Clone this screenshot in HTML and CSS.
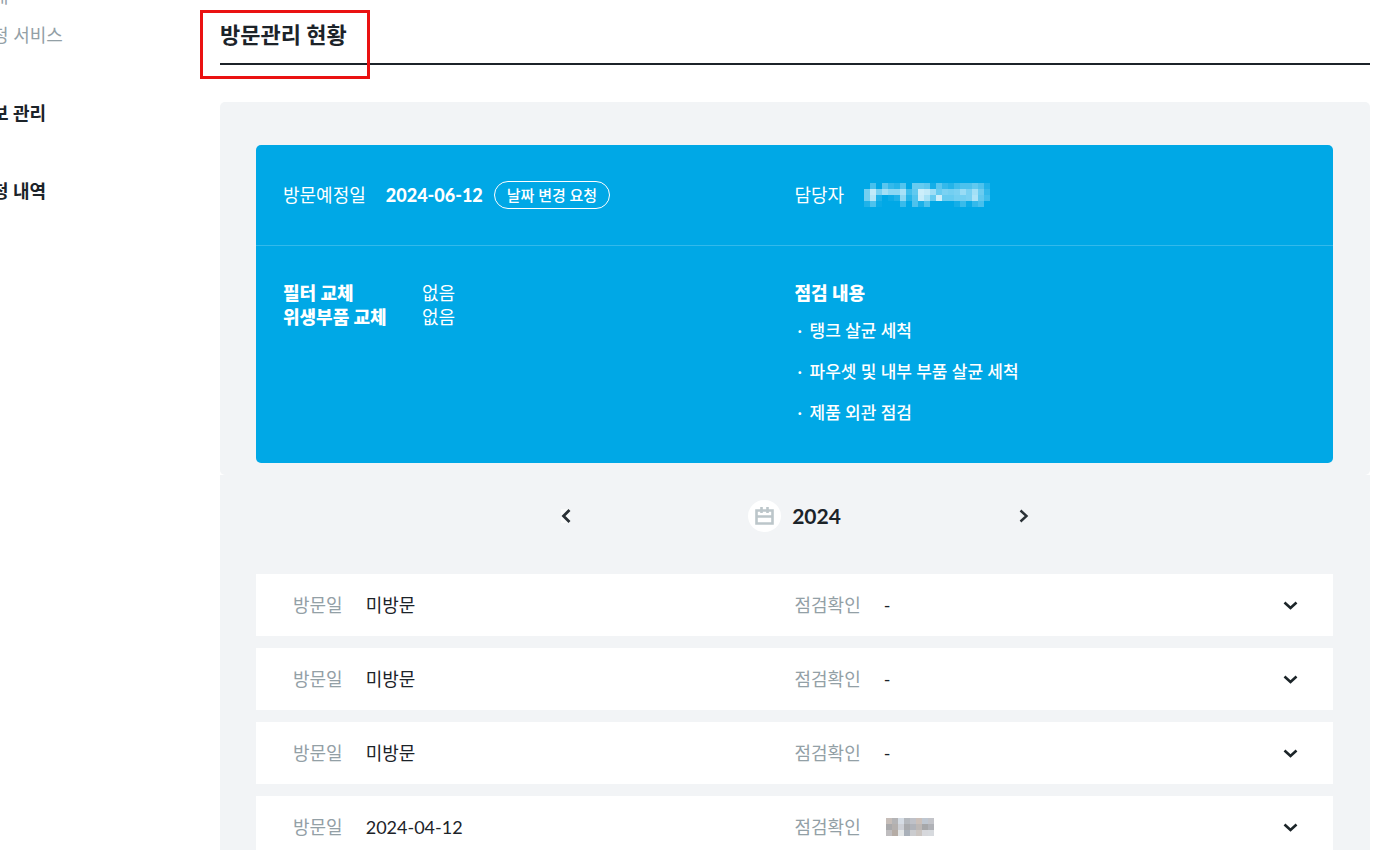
FILE: index.html
```html
<!DOCTYPE html>
<html lang="ko">
<head>
    <meta charset="UTF-8">
    <meta name="viewport" content="width=device-width, initial-scale=1.0">
    <title>방문관리 현황</title>
    <link rel="stylesheet" href="styles.css">
</head>
<body>
    <div class="page">
        <nav class="sidebar">
            <a href="#" class="side-link">내</a>
            <a href="#" class="side-link">청 서비스</a>
            <a href="#" class="side-title">보 관리</a>
            <a href="#" class="side-title">청 내역</a>
        </nav>

        <main class="content">
            <div class="title-area">
                <h1 class="page-title">방문관리 현황</h1>
                <div class="title-mark"></div>
            </div>

            <section class="panel panel-plan">
                <div class="plan-card">
                    <div class="plan-head">
                        <div class="plan-item">
                            <span>방문예정일</span>
                            <div class="plan-date">
                                <strong>2024-06-12</strong>
                                <button type="button" class="change-btn">날짜 변경 요청</button>
                            </div>
                        </div>
                        <div class="plan-item">
                            <span>담당자</span>
                            <svg class="mosaic" id="managerName" width="126" height="24" viewBox="0 0 126 24" shape-rendering="crispEdges"></svg>
                        </div>
                    </div>
                    <div class="plan-body">
                        <dl class="parts">
                            <dt>필터 교체</dt>
                            <dd>없음</dd>
                            <dt>위생부품 교체</dt>
                            <dd>없음</dd>
                        </dl>
                        <div class="check">
                            <h2 class="check-title">점검 내용</h2>
                            <ul class="check-list">
                                <li>탱크 살균 세척</li>
                                <li>파우셋 및 내부 부품 살균 세척</li>
                                <li>제품 외관 점검</li>
                            </ul>
                        </div>
                    </div>
                </div>
            </section>

            <section class="panel panel-history">
                <div class="year-nav">
                    <button type="button" class="icon-btn" aria-label="이전 연도">
                        <svg width="16" height="16" viewBox="0 0 16 16"><path d="M3 1h9v14H3z" fill="#fff" opacity="0.6"/><path d="M11.500 2 5.500 8l6 6" fill="none" stroke="#2a3136" stroke-width="2.800"/></svg>
                    </button>
                    <div class="year">
                        <span class="year-icon">
                            <svg width="19" height="18" viewBox="0 0 19 18"><path d="M1.500 3.500h16v13h-16zM1.500 9.500h16M6.500 0v6M12.500 0v6" fill="none" stroke="#bcc6ca" stroke-width="2.600"/></svg>
                        </span>
                        <strong>2024</strong>
                    </div>
                    <button type="button" class="icon-btn" aria-label="다음 연도">
                        <svg width="16" height="16" viewBox="0 0 16 16"><path d="M5.500 2.500 11.500 8l-6 5.500" fill="none" stroke="#2a3136" stroke-width="2.400"/></svg>
                    </button>
                </div>

                <ul class="visit-list">
                    <li class="visit">
                        <div class="visit-cell"><span class="label">방문일</span><span>미방문</span></div>
                        <div class="visit-cell"><span class="label">점검확인</span><span>-</span></div>
                        <button type="button" class="icon-btn visit-toggle" aria-label="상세 보기">
                            <svg width="16" height="16" viewBox="0 0 16 16"><path d="M2.500 5.500 8.500 11l6-5.500" fill="none" stroke="#1c2529" stroke-width="2.600"/></svg>
                        </button>
                    </li>
                    <li class="visit">
                        <div class="visit-cell"><span class="label">방문일</span><span>미방문</span></div>
                        <div class="visit-cell"><span class="label">점검확인</span><span>-</span></div>
                        <button type="button" class="icon-btn visit-toggle" aria-label="상세 보기">
                            <svg width="16" height="16" viewBox="0 0 16 16"><path d="M2.500 5.500 8.500 11l6-5.500" fill="none" stroke="#1c2529" stroke-width="2.600"/></svg>
                        </button>
                    </li>
                    <li class="visit">
                        <div class="visit-cell"><span class="label">방문일</span><span>미방문</span></div>
                        <div class="visit-cell"><span class="label">점검확인</span><span>-</span></div>
                        <button type="button" class="icon-btn visit-toggle" aria-label="상세 보기">
                            <svg width="16" height="16" viewBox="0 0 16 16"><path d="M2.500 5.500 8.500 11l6-5.500" fill="none" stroke="#1c2529" stroke-width="2.600"/></svg>
                        </button>
                    </li>
                    <li class="visit">
                        <div class="visit-cell"><span class="label">방문일</span><span>2024-04-12</span></div>
                        <div class="visit-cell"><span class="label">점검확인</span><svg class="mosaic" id="checkName" width="50" height="18" viewBox="-2 0 50 18" shape-rendering="crispEdges"></svg></div>
                        <button type="button" class="icon-btn visit-toggle" aria-label="상세 보기">
                            <svg width="16" height="16" viewBox="0 0 16 16"><path d="M2.500 5.500 8.500 11l6-5.500" fill="none" stroke="#1c2529" stroke-width="2.600"/></svg>
                        </button>
                    </li>
                </ul>
            </section>
        </main>
    </div>

    <script>
        // Names are masked with a mosaic of 6px cells
        function drawMosaic(id, rows, paint) {
            const svg = document.getElementById(id);
            rows.forEach((row, y) => {
                row.forEach((value, x) => {
                    const rect = document.createElementNS('http://www.w3.org/2000/svg', 'rect');
                    rect.setAttribute('x', x * 6);
                    rect.setAttribute('y', y * 6);
                    rect.setAttribute('width', 6);
                    rect.setAttribute('height', 6);
                    paint(rect, value);
                    svg.appendChild(rect);
                });
            });
        }

        // White cells, opacity in percent
        drawMosaic('managerName', [
            [0, 28, 0, 35, 20, 15, 32, 0, 40, 40, 36, 8, 35, 20, 14, 25, 30, 30, 38, 30, 12],
            [45, 76, 48, 64, 55, 55, 66, 25, 38, 80, 76, 62, 40, 48, 45, 48, 60, 48, 64, 42, 20],
            [45, 70, 12, 0, 5, 12, 55, 15, 32, 78, 65, 40, 80, 40, 40, 45, 45, 48, 68, 38, 25],
            [12, 30, 4, 0, 0, 0, 22, 0, 30, 10, 30, 0, 0, 0, 0, 8, 22, 4, 20, 28, 0]
        ], (rect, value) => {
            rect.setAttribute('fill', '#ffffff');
            rect.setAttribute('fill-opacity', value / 100);
        });

        drawMosaic('checkName', [
            ['#c6bdb8', '#b4b4b6', '#d5dce4', '#b5b9be', '#bfc1c8', '#cbc0ba', '#bfc7d1', '#c3c4c9'],
            ['#a9a9ab', '#b4b0ae', '#cdd0d6', '#a9abae', '#b0b3ba', '#bdb8b6', '#a6a7a9', '#b0b2b7'],
            ['#bfbdbf', '#b5aca5', '#e2e5e6', '#a9b0b9', '#cbcccf', '#cbc5c1', '#d7d8dc', '#d7dade']
        ], (rect, value) => rect.setAttribute('fill', value));
    </script>
</body>
</html>
```

FILE: styles.css
```css
* {
    margin: 0;
    padding: 0;
    box-sizing: border-box;
}

body {
    font-family: Lato, 'Noto Sans CJK KR', sans-serif;
    font-size: 18px;
    line-height: 24px;
    color: #1c2329;
    background: #fff;
}

button {
    font-family: inherit;
    color: inherit;
    background: none;
    border: none;
    cursor: pointer;
}

ul {
    list-style: none;
}

.page {
    display: flex;
    height: 100vh;
    overflow: hidden;
}

/* Sidebar */
.sidebar {
    flex: 0 0 228px;
    margin: -23px 0 0 -8px;
}

.side-link,
.side-title {
    display: block;
    line-height: 39px;
    text-decoration: none;
}

.side-link {
    color: #93a0a6;
}

.side-title {
    margin-top: 39px;
    color: #1c2329;
    font-weight: 700;
}

/* Title */
.content {
    flex: 1;
    min-width: 0;
    margin-right: 11px;
}

.title-area {
    position: relative;
    padding: 19px 0 12px;
    border-bottom: 2px solid #1c2329;
    margin-bottom: 37px;
}

.page-title {
    font-size: 22px;
    line-height: 32px;
    font-weight: 700;
}

.title-mark {
    position: absolute;
    top: 10px;
    left: -20px;
    width: 170px;
    height: 69px;
    border: 3px solid #ea1111;
}

/* Panels */
.panel {
    background: #f2f4f6;
    padding: 0 37px 0 36px;
}

.panel-plan {
    padding-top: 43px;
    padding-bottom: 12px;
    border-radius: 5px;
}

.plan-card {
    background: #00a8e6;
    border-radius: 5px;
    color: #fff;
}

.plan-head,
.plan-body {
    display: grid;
    grid-template-columns: 1fr 1fr;
    padding: 0 27px;
}

.plan-head {
    height: 101px;
    align-items: center;
    border-bottom: 1px solid #33b9eb;
}

.plan-item {
    display: flex;
    align-items: center;
    gap: 20px;
}

.plan-date {
    display: flex;
    align-items: center;
    gap: 11px;
}

.plan-date strong {
    font-weight: 900;
}

.change-btn {
    height: 28px;
    padding: 0 12px;
    border: 1px solid #fff;
    border-radius: 14px;
    font-size: 15px;
    line-height: 24px;
    font-weight: 500;
}

.plan-body {
    padding-top: 35px;
    padding-bottom: 30px;
}

.parts {
    display: grid;
    grid-template-columns: 139px 1fr;
    align-content: start;
}

.parts dt,
.check-title {
    font-size: 18px;
    font-weight: 900;
}

.check-list {
    margin-top: 5px;
}

.check-list li {
    display: flex;
    font-size: 17px;
    line-height: 41px;
    font-weight: 500;
}

.check-list li::before {
    content: '·';
    width: 12px;
    padding-left: 3px;
}

.mosaic {
    display: block;
}

/* Visit history */
.panel-history {
    min-height: 100vh;
    padding-top: 24px;
}

.year-nav {
    display: flex;
    justify-content: space-between;
    align-items: center;
    max-width: 474px;
    height: 34px;
    margin: 0 auto 41px;
}

.year {
    display: flex;
    align-items: center;
    gap: 11px;
    font-size: 21px;
}

.year-icon {
    display: flex;
    justify-content: center;
    align-items: center;
    width: 33px;
    height: 32px;
    border-radius: 50%;
    background: #fff;
}

.icon-btn {
    width: 16px;
    height: 16px;
}

.icon-btn svg {
    display: block;
}

.visit-list {
    display: flex;
    flex-direction: column;
    gap: 12px;
}

.visit {
    position: relative;
    display: grid;
    grid-template-columns: 1fr 1fr;
    align-items: center;
    height: 62px;
    background: #fff;
}

.visit-cell {
    display: flex;
    align-items: center;
    gap: 23px;
}

.visit-cell:first-child {
    padding-left: 37px;
}

.label {
    color: #93a0a6;
}

.visit-toggle {
    position: absolute;
    top: 23px;
    right: 35px;
}
```
